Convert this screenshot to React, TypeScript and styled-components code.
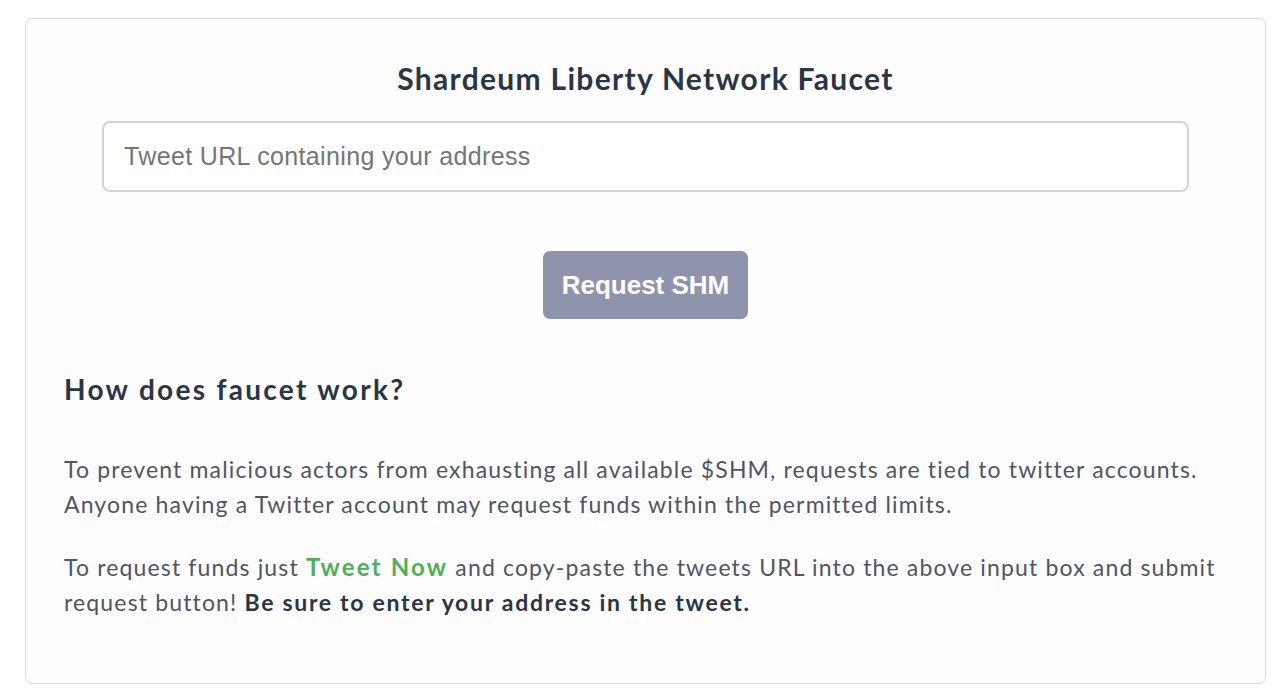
import React from 'react';
import styled, { createGlobalStyle } from 'styled-components';

const GlobalStyle = createGlobalStyle`
  html, body {
    margin: 0;
    padding: 0;
    background: #ffffff;
  }
  * {
    box-sizing: border-box;
  }
`;

const colors = {
  heading: '#2a3546',
  body: '#4f5663',
  green: '#4fb05a',
  border: '#dcdcdc',
  inputBorder: '#d3d3d3',
  button: '#8f94ad',
  placeholder: '#7a7a7a',
};

export default function App() {
  return (
    <>
      <GlobalStyle />
      <Page>
        <FaucetCard>
          <Title>Shardeum Liberty Network Faucet</Title>
          <UrlInput placeholder='Tweet URL containing your address' />
          <ButtonRow>
            <RequestButton disabled>Request SHM</RequestButton>
          </ButtonRow>
          <Info>
            <InfoTitle>How does faucet work?</InfoTitle>
            <Paragraph>
              To prevent malicious actors from exhausting all available $SHM, requests are tied to twitter accounts.
              Anyone having a Twitter account may request funds within the permitted limits.
            </Paragraph>
            <Paragraph>
              To request funds just <TweetLink href='#'>Tweet Now</TweetLink> and copy-paste the tweets URL into
              the above input box and submit request button! <Strong>Be sure to enter your address in the tweet.</Strong>
            </Paragraph>
          </Info>
        </FaucetCard>
      </Page>
    </>
  );
}

const Page = styled.div`
  padding: 18px 14px 9px 25px;
  font-family: Lato, 'Noto Sans', sans-serif;
`;

const FaucetCard = styled.div`
  height: 666px;
  border: 1px solid ${colors.border};
  border-radius: 7px;
  background: #fdfdfd;
  padding-top: 39px;
  display: flex;
  flex-direction: column;
`;

const Title = styled.h1`
  margin: 0;
  text-align: center;
  font-size: 30px;
  line-height: 40px;
  font-weight: 700;
  color: ${colors.heading};
  letter-spacing: 1.3px;
`;

const UrlInput = styled.input`
  margin: 23px 76px 0 76px;
  height: 71px;
  border: 2px solid ${colors.inputBorder};
  border-radius: 8px;
  background: #fff;
  padding: 0 20px;
  font-family: 'Liberation Sans', Arial, sans-serif;
  font-size: 25px;
  letter-spacing: 0.35px;
  color: ${colors.heading};
  outline: none;

  ::placeholder {
    color: ${colors.placeholder};
  }
`;

const ButtonRow = styled.div`
  display: flex;
  justify-content: center;
  margin-top: 59px;
`;

const RequestButton = styled.button`
  width: 205px;
  height: 68px;
  border: none;
  border-radius: 7px;
  background: ${colors.button};
  color: #fff;
  font-family: 'Liberation Sans', Arial, sans-serif;
  font-size: 26px;
  font-weight: 700;
  cursor: not-allowed;
`;

const Info = styled.div`
  margin-top: 50px;
  padding: 0 20px 0 38px;
`;

const InfoTitle = styled.h2`
  margin: 0 0 43px 0;
  font-size: 28px;
  line-height: 40px;
  font-weight: 700;
  letter-spacing: 2.3px;
  color: ${colors.heading};
`;

const Paragraph = styled.p`
  margin: 0 0 27px 0;
  font-size: 23px;
  line-height: 35px;
  letter-spacing: 1.15px;
  color: ${colors.body};
`;

const TweetLink = styled.a`
  color: ${colors.green};
  font-weight: 700;
  font-size: 24px;
  letter-spacing: 2.2px;
  text-decoration: none;
`;

const Strong = styled.strong`
  color: ${colors.heading};
  font-weight: 700;
  letter-spacing: 1.7px;
`;
